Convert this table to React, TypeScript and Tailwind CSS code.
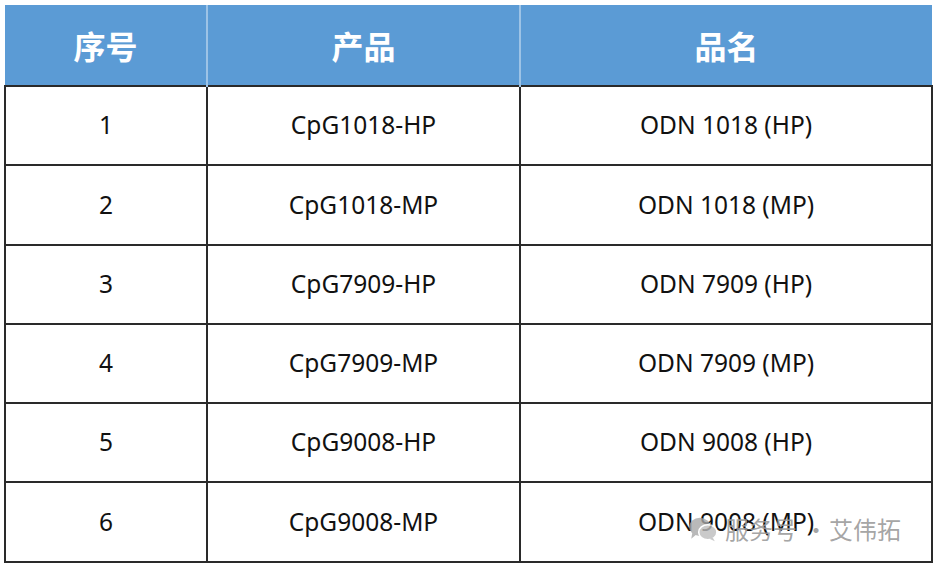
import React from 'react';

const rows = [
  { no: '1', product: 'CpG1018-HP', name: 'ODN 1018 (HP)' },
  { no: '2', product: 'CpG1018-MP', name: 'ODN 1018 (MP)' },
  { no: '3', product: 'CpG7909-HP', name: 'ODN 7909 (HP)' },
  { no: '4', product: 'CpG7909-MP', name: 'ODN 7909 (MP)' },
  { no: '5', product: 'CpG9008-HP', name: 'ODN 9008 (HP)' },
  { no: '6', product: 'CpG9008-MP', name: 'ODN 9008 (MP)' },
];

const WeChatIcon = () => (
  <svg width="30" height="26" viewBox="0 0 28 24" className="opacity-80">
    <ellipse cx="11" cy="10" rx="10" ry="8.5" fill="#a8a8a8" />
    <path d="M4 16 L3 21 L8 17 Z" fill="#a8a8a8" />
    <ellipse cx="18.5" cy="15" rx="8.5" ry="7" fill="#bdbdbd" stroke="#fff" strokeWidth="1.5" />
    <path d="M23 20 L25 23.5 L20 21 Z" fill="#bdbdbd" />
  </svg>
);

export default function App() {
  return (
    <div className="w-[935px] h-[567px] bg-white pt-[5px] pl-[4px] relative font-['Noto_Sans','Noto_Sans_CJK_SC',sans-serif]">
      <table className="border-collapse table-fixed w-[927px]">
        <colgroup>
          <col className="w-[202px]" />
          <col className="w-[313px]" />
          <col className="w-[412px]" />
        </colgroup>
        <thead>
          <tr className="h-[81px] bg-[#5b9bd5] text-white text-[32px] font-bold">
            <th className="border-r-2 border-[#9dc3e6] font-['Noto_Sans_CJK_SC',sans-serif]">序号</th>
            <th className="border-r-2 border-[#9dc3e6] font-['Noto_Sans_CJK_SC',sans-serif]">产品</th>
            <th className="font-['Noto_Sans_CJK_SC',sans-serif]">品名</th>
          </tr>
        </thead>
        <tbody className="text-[24.5px] text-[#111]">
          {rows.map((r) => (
            <tr key={r.no} className="h-[79.3px]">
              <td className="border-2 border-[#2a2a2a] text-center">{r.no}</td>
              <td className="border-2 border-[#2a2a2a] text-center">{r.product}</td>
              <td className="border-2 border-[#2a2a2a] text-center">{r.name}</td>
            </tr>
          ))}
        </tbody>
      </table>
      <div className="absolute left-[688px] top-[511px] flex items-center text-[24px] text-[#9a9a9a]/90 font-['Noto_Sans_CJK_SC',sans-serif]">
        <WeChatIcon />
        <span className="ml-[7px]">服务号</span>
        <span className="ml-[6px] w-[26px] text-center">·</span>
        <span>艾伟拓</span>
      </div>
    </div>
  );
}
